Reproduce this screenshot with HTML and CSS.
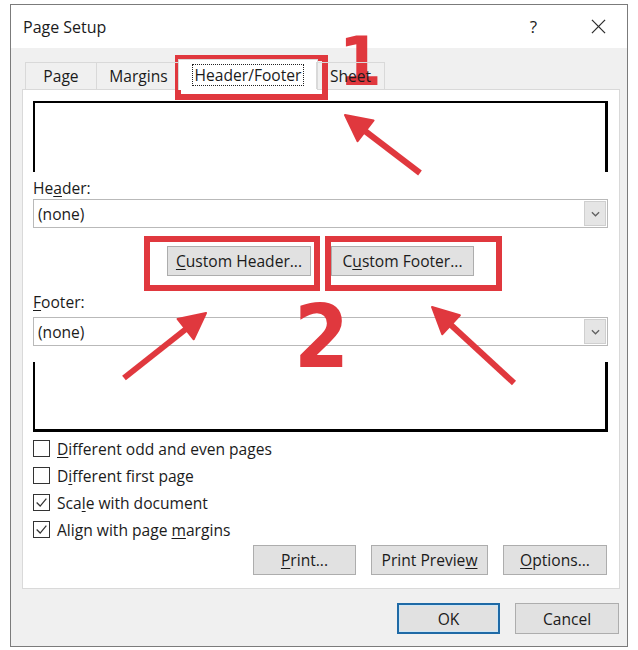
FILE: index.html
```html
<!DOCTYPE html>
<html lang="en">
<head>
    <meta charset="UTF-8">
    <meta name="viewport" content="width=device-width, initial-scale=1.0">
    <title>Page Setup</title>
    <link rel="stylesheet" href="styles.css">
</head>
<body>
    <div class="dialog">
        <div class="titlebar">
            <span class="title">Page Setup</span>
            <span class="help">?</span>
            <svg class="close" viewBox="0 0 16 16">
                <line x1="1" y1="1" x2="15" y2="15"/>
                <line x1="15" y1="1" x2="1" y2="15"/>
            </svg>
        </div>

        <div class="window-body">
            <div class="tabs">
                <div class="tab tab-page">Page</div>
                <div class="tab tab-margins">Margins</div>
                <div class="tab tab-active"><span class="focus">Header/Footer</span></div>
                <div class="tab tab-sheet">Sheet</div>
            </div>

            <div class="panel">
                <div class="preview preview-top"></div>

                <div class="field-label">He<u>a</u>der:</div>
                <div class="combo">
                    <span class="combo-value">(none)</span>
                    <span class="combo-btn">
                        <svg viewBox="0 0 10 6"><polyline points="1,1 5,5 9,1"/></svg>
                    </span>
                </div>

                <div class="custom-row">
                    <button class="btn btn-custom-header"><u>C</u>ustom Header...</button>
                    <button class="btn btn-custom-footer">C<u>u</u>stom Footer...</button>
                </div>

                <div class="field-label footer-label"><u>F</u>ooter:</div>
                <div class="combo combo-footer">
                    <span class="combo-value">(none)</span>
                    <span class="combo-btn">
                        <svg viewBox="0 0 10 6"><polyline points="1,1 5,5 9,1"/></svg>
                    </span>
                </div>

                <div class="preview preview-bottom"></div>

                <div class="checks">
                    <div class="check"><span class="box"></span><span><u>D</u>ifferent odd and even pages</span></div>
                    <div class="check"><span class="box"></span><span>D<u>i</u>fferent first page</span></div>
                    <div class="check">
                        <span class="box"><svg viewBox="0 0 17 17"><polyline points="3,8.5 7,12.5 14,4"/></svg></span>
                        <span>Sca<u>l</u>e with document</span>
                    </div>
                    <div class="check">
                        <span class="box"><svg viewBox="0 0 17 17"><polyline points="3,8.5 7,12.5 14,4"/></svg></span>
                        <span>Align with page <u>m</u>argins</span>
                    </div>
                </div>

                <div class="panel-buttons">
                    <button class="btn btn-print"><u>P</u>rint...</button>
                    <button class="btn btn-preview">Print Previe<u>w</u></button>
                    <button class="btn btn-options"><u>O</u>ptions...</button>
                </div>
            </div>

            <div class="footer-buttons">
                <button class="btn btn-ok">OK</button>
                <button class="btn btn-cancel">Cancel</button>
            </div>
        </div>
    </div>

    <!-- red annotations drawn over the screenshot -->
    <svg class="annotations" viewBox="0 0 638 650">
        <rect x="178" y="58" width="147" height="39"/>
        <rect x="147" y="239" width="170" height="49"/>
        <rect x="328" y="239" width="171" height="49"/>

        <line x1="365" y1="131" x2="420" y2="173"/>
        <polygon points="345,115 357.6,141.2 373.6,120.5"/>

        <line x1="186" y1="329" x2="124" y2="378"/>
        <polygon points="206,313 177.5,318.9 193.7,339.3"/>

        <line x1="451" y1="325" x2="514" y2="383"/>
        <polygon points="432,307 442.2,334.2 459.9,315.2"/>
    </svg>
    <span class="mark mark-one">1</span>
    <span class="mark mark-two">2</span>
</body>
</html>
```

FILE: styles.css
```css
*,::before,::after {
    box-sizing: border-box;
}
body {
    margin: 0;
    width: 638px;
    height: 650px;
    position: relative;
    overflow: hidden;
    background-color: #ffffff;
    font-family: 'Open Sans', 'Noto Sans', sans-serif;
    font-size: 15.6px;
    color: #1b1b1b;
}
u {
    text-decoration: underline;
    text-decoration-thickness: 1px;
    text-underline-offset: 2px;
}
.dialog {
    margin: 4px 0 0 10px;
    width: 618px;
    height: 643px;
    border: 1px solid #7b7b7b;
    background-color: #f0f0f0;
    display: flex;
    flex-direction: column;
}
.titlebar {
    height: 43px;
    flex-shrink: 0;
    background-color: #ffffff;
    display: flex;
    align-items: center;
    padding-left: 12px;
}
.title {
    flex: 1;
    font-size: 16px;
}
.help {
    font-size: 17px;
    margin-right: 54px;
}
.close {
    width: 15px;
    height: 15px;
    margin-right: 21px;
    stroke: #2a2a2a;
    stroke-width: 1.3;
}
.window-body {
    flex: 1;
    padding: 14px 7px 0 11px;
    display: flex;
    flex-direction: column;
}

/* tabs */
.tabs {
    display: flex;
    height: 27px;
    padding-left: 3px;
    position: relative;
    z-index: 1;
}
.tab {
    height: 27px;
    border: 1px solid #d9d9d9;
    border-bottom: none;
    display: flex;
    align-items: center;
    justify-content: center;
}
.tab-page {
    width: 72px;
}
.tab-margins {
    width: 85px;
    margin-left: -1px;
}
.tab-active {
    width: 140px;
    height: 31px;
    margin-left: -3px;
    margin-top: -3px;
    background-color: #ffffff;
}
.tab-sheet {
    width: 69px;
    margin-left: -2px;
}
.focus {
    border: 1px dotted #222;
    padding: 0 2px;
    line-height: 20px;
}

/* panel */
.panel {
    height: 500px;
    background-color: #ffffff;
    border: 1px solid #d9d9d9;
    padding: 11px 11px 0 10px;
}
.preview {
    border: 2px solid #000;
    border-right-width: 3px;
}
.preview-top {
    height: 71px;
    border-bottom: none;
}
.preview-bottom {
    height: 70px;
    margin-top: 16px;
    border-top: none;
    border-bottom-width: 3px;
}
.field-label {
    height: 20px;
    line-height: 20px;
    margin-top: 6px;
}
.footer-label {
    margin-top: 16px;
}
.combo {
    height: 29px;
    margin-top: 1px;
    border: 1px solid #b9b9b9;
    display: flex;
    align-items: center;
    padding-left: 4px;
}
.combo-footer {
    margin-top: 5px;
}
.combo-value {
    flex: 1;
}
.combo-btn {
    width: 22px;
    height: 25px;
    margin-right: 1px;
    background-color: #e5e5e5;
    border: 1px solid #cfcfcf;
    display: flex;
    align-items: center;
    justify-content: center;
}
.combo-btn svg {
    width: 9px;
    height: 6px;
    fill: none;
    stroke: #606060;
    stroke-width: 1.4;
}

/* buttons */
.btn {
    height: 30px;
    padding: 0;
    border: 1px solid #adadad;
    background-color: #e1e1e1;
    font-family: inherit;
    font-size: 15.6px;
    color: #1b1b1b;
}
.custom-row {
    display: flex;
    justify-content: center;
    gap: 20px;
    margin-top: 18px;
}
.btn-custom-header {
    width: 144px;
}
.btn-custom-footer {
    width: 143px;
}

/* checkboxes */
.checks {
    margin-top: 3px;
}
.check {
    height: 27px;
    display: flex;
    align-items: center;
    gap: 7px;
}
.box {
    width: 17px;
    height: 17px;
    border: 1px solid #333;
    background-color: #fff;
    display: flex;
}
.box svg {
    width: 15px;
    height: 15px;
    fill: none;
    stroke: #333;
    stroke-width: 1.4;
}

.panel-buttons {
    display: flex;
    justify-content: flex-end;
    gap: 15px;
    margin-top: 2px;
    padding-right: 1px;
}
.btn-print {
    width: 103px;
}
.btn-preview {
    width: 117px;
}
.btn-options {
    width: 104px;
}
.footer-buttons {
    display: flex;
    justify-content: flex-end;
    gap: 15px;
    margin-top: 14px;
    padding-right: 1px;
}
.btn-ok, .btn-cancel {
    height: 31px;
}
.btn-ok {
    width: 103px;
    border: 2px solid #1f6aa6;
    box-shadow: inset 0 0 0 1px #cfe6f5;
}
.btn-cancel {
    width: 104px;
}

/* annotations */
.annotations {
    position: absolute;
    top: 0;
    left: 0;
    width: 638px;
    height: 650px;
    pointer-events: none;
}
.annotations rect {
    fill: none;
    stroke: #e0383e;
    stroke-width: 6;
}
.annotations line {
    stroke: #e0383e;
    stroke-width: 6;
}
.annotations polygon {
    fill: #e0383e;
    stroke: #e0383e;
    stroke-width: 2;
    stroke-linejoin: round;
}
.mark {
    position: absolute;
    font-family: 'DejaVu Sans Condensed', 'DejaVu Sans', sans-serif;
    font-weight: bold;
    line-height: 1;
    color: #e0383e;
}
.mark-one {
    top: 28px;
    left: 339px;
    font-size: 68px;
}
.mark-two {
    top: 293px;
    left: 294px;
    font-size: 88px;
}
```
